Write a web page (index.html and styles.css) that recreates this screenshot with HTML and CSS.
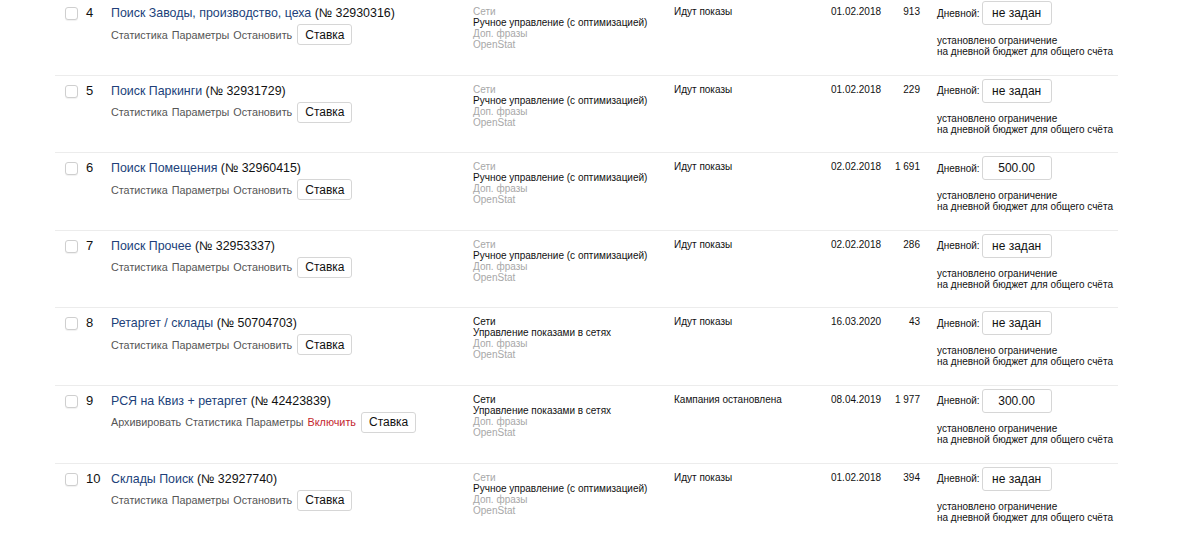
FILE: index.html
```html
<!DOCTYPE html>
<html lang="ru">
<head>
<meta charset="utf-8">
<link rel="stylesheet" href="styles.css">
</head>
<body>
<div class="table">
  <div class="row">
    <div class="cell-check"><span class="checkbox"></span></div>
    <div class="num">4</div>
    <div class="name">
      <div class="title"><a class="link">Поиск Заводы, производство, цеха</a> (№ 32930316)</div>
      <div class="actions"><span>Статистика</span><span>Параметры</span><span>Остановить</span><button class="btn">Ставка</button></div>
    </div>
    <div class="strategy"><div class="muted">Сети</div><div>Ручное управление (с оптимизацией)</div><div class="muted">Доп. фразы</div><div class="muted">OpenStat</div></div>
    <div class="status">Идут показы</div>
    <div class="date">01.02.2018</div>
    <div class="count">913</div>
    <div class="budget"><div class="budget-line"><span>Дневной:</span><span class="input">не задан</span></div><div class="note">установлено ограничение<br>на дневной бюджет для общего счёта</div></div>
  </div>
  <div class="row">
    <div class="cell-check"><span class="checkbox"></span></div>
    <div class="num">5</div>
    <div class="name">
      <div class="title"><a class="link">Поиск Паркинги</a> (№ 32931729)</div>
      <div class="actions"><span>Статистика</span><span>Параметры</span><span>Остановить</span><button class="btn">Ставка</button></div>
    </div>
    <div class="strategy"><div class="muted">Сети</div><div>Ручное управление (с оптимизацией)</div><div class="muted">Доп. фразы</div><div class="muted">OpenStat</div></div>
    <div class="status">Идут показы</div>
    <div class="date">01.02.2018</div>
    <div class="count">229</div>
    <div class="budget"><div class="budget-line"><span>Дневной:</span><span class="input">не задан</span></div><div class="note">установлено ограничение<br>на дневной бюджет для общего счёта</div></div>
  </div>
  <div class="row">
    <div class="cell-check"><span class="checkbox"></span></div>
    <div class="num">6</div>
    <div class="name">
      <div class="title"><a class="link">Поиск Помещения</a> (№ 32960415)</div>
      <div class="actions"><span>Статистика</span><span>Параметры</span><span>Остановить</span><button class="btn">Ставка</button></div>
    </div>
    <div class="strategy"><div class="muted">Сети</div><div>Ручное управление (с оптимизацией)</div><div class="muted">Доп. фразы</div><div class="muted">OpenStat</div></div>
    <div class="status">Идут показы</div>
    <div class="date">02.02.2018</div>
    <div class="count">1 691</div>
    <div class="budget"><div class="budget-line"><span>Дневной:</span><span class="input">500.00</span></div><div class="note">установлено ограничение<br>на дневной бюджет для общего счёта</div></div>
  </div>
  <div class="row">
    <div class="cell-check"><span class="checkbox"></span></div>
    <div class="num">7</div>
    <div class="name">
      <div class="title"><a class="link">Поиск Прочее</a> (№ 32953337)</div>
      <div class="actions"><span>Статистика</span><span>Параметры</span><span>Остановить</span><button class="btn">Ставка</button></div>
    </div>
    <div class="strategy"><div class="muted">Сети</div><div>Ручное управление (с оптимизацией)</div><div class="muted">Доп. фразы</div><div class="muted">OpenStat</div></div>
    <div class="status">Идут показы</div>
    <div class="date">02.02.2018</div>
    <div class="count">286</div>
    <div class="budget"><div class="budget-line"><span>Дневной:</span><span class="input">не задан</span></div><div class="note">установлено ограничение<br>на дневной бюджет для общего счёта</div></div>
  </div>
  <div class="row">
    <div class="cell-check"><span class="checkbox"></span></div>
    <div class="num">8</div>
    <div class="name">
      <div class="title"><a class="link">Ретаргет / склады</a> (№ 50704703)</div>
      <div class="actions"><span>Статистика</span><span>Параметры</span><span>Остановить</span><button class="btn">Ставка</button></div>
    </div>
    <div class="strategy"><div>Сети</div><div>Управление показами в сетях</div><div class="muted">Доп. фразы</div><div class="muted">OpenStat</div></div>
    <div class="status">Идут показы</div>
    <div class="date">16.03.2020</div>
    <div class="count">43</div>
    <div class="budget"><div class="budget-line"><span>Дневной:</span><span class="input">не задан</span></div><div class="note">установлено ограничение<br>на дневной бюджет для общего счёта</div></div>
  </div>
  <div class="row">
    <div class="cell-check"><span class="checkbox"></span></div>
    <div class="num">9</div>
    <div class="name">
      <div class="title"><a class="link">РСЯ на Квиз + ретаргет</a> (№ 42423839)</div>
      <div class="actions"><span>Архивировать</span><span>Статистика</span><span>Параметры</span><span class="red">Включить</span><button class="btn">Ставка</button></div>
    </div>
    <div class="strategy"><div>Сети</div><div>Управление показами в сетях</div><div class="muted">Доп. фразы</div><div class="muted">OpenStat</div></div>
    <div class="status">Кампания остановлена</div>
    <div class="date">08.04.2019</div>
    <div class="count">1 977</div>
    <div class="budget"><div class="budget-line"><span>Дневной:</span><span class="input">300.00</span></div><div class="note">установлено ограничение<br>на дневной бюджет для общего счёта</div></div>
  </div>
  <div class="row">
    <div class="cell-check"><span class="checkbox"></span></div>
    <div class="num">10</div>
    <div class="name">
      <div class="title"><a class="link">Склады Поиск</a> (№ 32927740)</div>
      <div class="actions"><span>Статистика</span><span>Параметры</span><span>Остановить</span><button class="btn">Ставка</button></div>
    </div>
    <div class="strategy"><div class="muted">Сети</div><div>Ручное управление (с оптимизацией)</div><div class="muted">Доп. фразы</div><div class="muted">OpenStat</div></div>
    <div class="status">Идут показы</div>
    <div class="date">01.02.2018</div>
    <div class="count">394</div>
    <div class="budget"><div class="budget-line"><span>Дневной:</span><span class="input">не задан</span></div><div class="note">установлено ограничение<br>на дневной бюджет для общего счёта</div></div>
  </div>
</div>
</body>
</html>
```
FILE: styles.css
```css
html, body {
  margin: 0;
  padding: 0;
  background: #fff;
}
body {
  font-family: "Liberation Sans", Arial, sans-serif;
  color: #000;
  overflow: hidden;
}
.table {
  margin: -3px 0 0 55px;
  width: 1063px;
}
.row {
  display: grid;
  grid-template-columns: 10px 21px 25px 362px 201px 157px 50px 39px 198px;
  height: 77.6px;
  box-sizing: border-box;
  border-top: 1px solid #ececec;
}
.cell-check {
  grid-column: 2;
  padding-top: 9px;
}
.checkbox {
  display: block;
  width: 11px;
  height: 11px;
  border: 1px solid #cfcfcf;
  border-radius: 3px;
  background: #fff;
  box-shadow: 0 1px 1px rgba(0,0,0,0.06);
}
.num {
  font-size: 13px;
  line-height: 16px;
  padding-top: 7px;
  color: #111;
}
.name {
  padding-top: 7px;
}
.title {
  font-size: 12.4px;
  line-height: 16px;
  color: #111;
}
.link {
  color: #213f7a;
}
.actions {
  display: flex;
  align-items: center;
  margin-top: 3px;
  font-size: 10.8px;
  color: #555;
  gap: 4px;
}
.red {
  color: #c4262e;
}
.btn {
  font-family: inherit;
  font-size: 12px;
  color: #111;
  background: #fff;
  border: 1px solid #d6d6d6;
  border-radius: 3px;
  height: 21px;
  padding: 0 7px;
  margin-left: 1px;
}
.strategy {
  padding-top: 8px;
  font-size: 10px;
  line-height: 11px;
  color: #111;
}
.muted {
  color: #a8a8a8;
}
.status, .date, .count {
  padding-top: 8px;
  font-size: 10px;
  line-height: 12px;
  color: #111;
}
.count {
  text-align: right;
}
.budget {
  padding-left: 17px;
  padding-top: 3px;
  font-size: 10px;
  color: #111;
}
.budget-line {
  display: flex;
  align-items: center;
  gap: 2px;
}
.input {
  display: inline-flex;
  align-items: center;
  justify-content: center;
  width: 68px;
  height: 22px;
  border: 1px solid #d6d6d6;
  border-radius: 3px;
  font-size: 12px;
  color: #111;
}
.note {
  margin-top: 10px;
  line-height: 11px;
}
```
